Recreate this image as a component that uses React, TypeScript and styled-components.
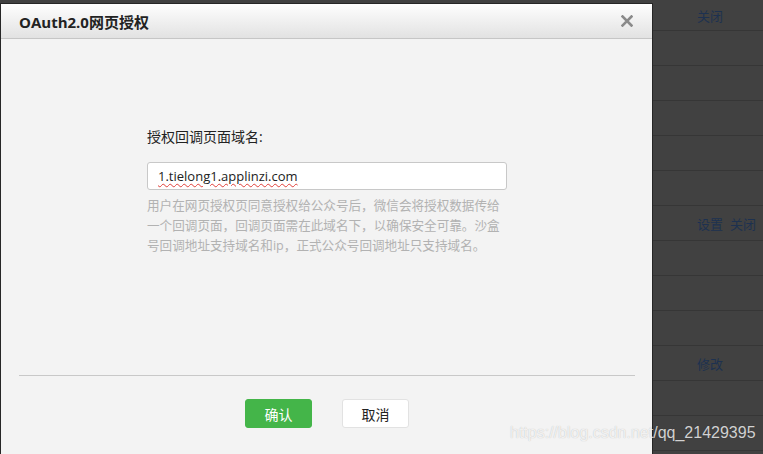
import * as React from 'react';
import styled, { createGlobalStyle } from 'styled-components';

const GlobalStyle = createGlobalStyle`
  html, body {
    margin: 0;
    padding: 0;
    background: #414141;
  }
  body {
    font-family: "Noto Sans CJK SC", "Open Sans", sans-serif;
  }
`;

const cjk = `"Open Sans", "Noto Sans CJK SC", sans-serif`;

const Page = styled.div`
  position: relative;
  width: 763px;
  height: 454px;
  overflow: hidden;
  background: #414141;
`;

// background list that the modal sits on top of
const Table = styled.div`
  display: flex;
  flex-direction: column;
`;

const Row = styled.div<{ first?: boolean }>`
  display: flex;
  justify-content: flex-end;
  align-items: center;
  height: ${(p) => (p.first ? '30px' : '34px')};
  border-bottom: 1px solid #363636;
`;

const Actions = styled.div`
  width: 66px;
  display: flex;
  gap: 7px;
  font-family: ${cjk};
  font-size: 13px;
  color: #1d3150;
`;

const Dialog = styled.div`
  position: absolute;
  left: 0;
  top: 3px;
  width: 651px;
  height: 460px;
  border: 1px solid #262626;
  border-bottom: none;
  background: #f3f3f3;
  display: flex;
  flex-direction: column;
`;

const Header = styled.div`
  height: 34px;
  flex: none;
  display: flex;
  align-items: center;
  justify-content: space-between;
  padding: 0 18px;
  background: linear-gradient(#fefefe, #e2e2e2);
  border-bottom: 1px solid #c6c6c6;
`;

const Title = styled.div`
  font-family: ${cjk};
  font-size: 15px;
  font-weight: 700;
  color: #222;
`;

const Close = styled.div`
  width: 14px;
  height: 14px;
  display: flex;
  align-items: center;
  justify-content: center;
`;

const Body = styled.div`
  height: 336px;
  flex: none;
  padding: 88px 0 0 146px;
  box-sizing: border-box;
`;

const Label = styled.div`
  font-family: ${cjk};
  font-size: 14px;
  line-height: 20px;
  color: #222;
`;

const InputBox = styled.div`
  margin-top: 15px;
  width: 360px;
  height: 28px;
  box-sizing: border-box;
  border: 1px solid #c8c8c8;
  border-radius: 3px;
  background: #fff;
  padding: 0 10px;
  display: flex;
  align-items: center;
  font-family: ${cjk};
  font-size: 13px;
  color: #222;
`;

const Misspelled = styled.span`
  text-decoration: underline wavy #e0403a;
  text-decoration-thickness: 1px;
  text-underline-offset: 2px;
`;

const Help = styled.div`
  margin-top: 6px;
  width: 360px;
  font-family: ${cjk};
  font-size: 12.6px;
  line-height: 20px;
  color: #b2b2b2;
`;

const Footer = styled.div`
  margin: 0 17px 0 18px;
  border-top: 1px solid #c8c8c8;
  padding-top: 23px;
  display: flex;
  justify-content: center;
  gap: 30px;
`;

const Button = styled.button<{ primary?: boolean }>`
  width: 67px;
  height: 29px;
  box-sizing: border-box;
  border-radius: 3px;
  border: 1px solid ${(p) => (p.primary ? '#44b549' : '#e2e2e2')};
  background: ${(p) => (p.primary ? '#44b549' : '#fff')};
  color: ${(p) => (p.primary ? '#fff' : '#222')};
  font-family: ${cjk};
  font-size: 14px;
  padding: 0;
  cursor: pointer;
`;

const Watermark = styled.div`
  position: absolute;
  left: 510px;
  top: 424px;
  font-family: "Liberation Sans", Arial, sans-serif;
  font-size: 16px;
  color: rgba(255, 255, 255, 0.78);
  text-shadow: 0 0 1px rgba(0, 0, 0, 0.25);
  white-space: nowrap;
`;

const rows: string[][] = [
  ['关闭'],
  [], [], [], [], [],
  ['设置', '关闭'],
  [], [], [],
  ['修改'],
  [], [],
];

export default function App() {
  return (
    <Page>
      <GlobalStyle />
      <Table>
        {rows.map((r, i) => (
          <Row key={i} first={i === 0}>
            <Actions>
              {r.map((a) => (
                <span key={a}>{a}</span>
              ))}
            </Actions>
          </Row>
        ))}
      </Table>
      <Dialog>
        <Header>
          <Title>OAuth2.0网页授权</Title>
          <Close>
            <svg width="12" height="12" viewBox="0 0 12 12">
              <path d="M1.5 1.5 L10.5 10.5 M10.5 1.5 L1.5 10.5" stroke="#8a8a8a" strokeWidth="2.6" strokeLinecap="square" />
            </svg>
          </Close>
        </Header>
        <Body>
          <Label>授权回调页面域名:</Label>
          <InputBox>
            <Misspelled>1.tielong1.applinzi.com</Misspelled>
          </InputBox>
          <Help>
            用户在网页授权页同意授权给公众号后，微信会将授权数据传给一个回调页面，回调页面需在此域名下，以确保安全可靠。沙盒号回调地址支持域名和ip，正式公众号回调地址只支持域名。
          </Help>
        </Body>
        <Footer>
          <Button primary>确认</Button>
          <Button>取消</Button>
        </Footer>
      </Dialog>
      <Watermark>https://blog.csdn.net/qq_21429395</Watermark>
    </Page>
  );
}
